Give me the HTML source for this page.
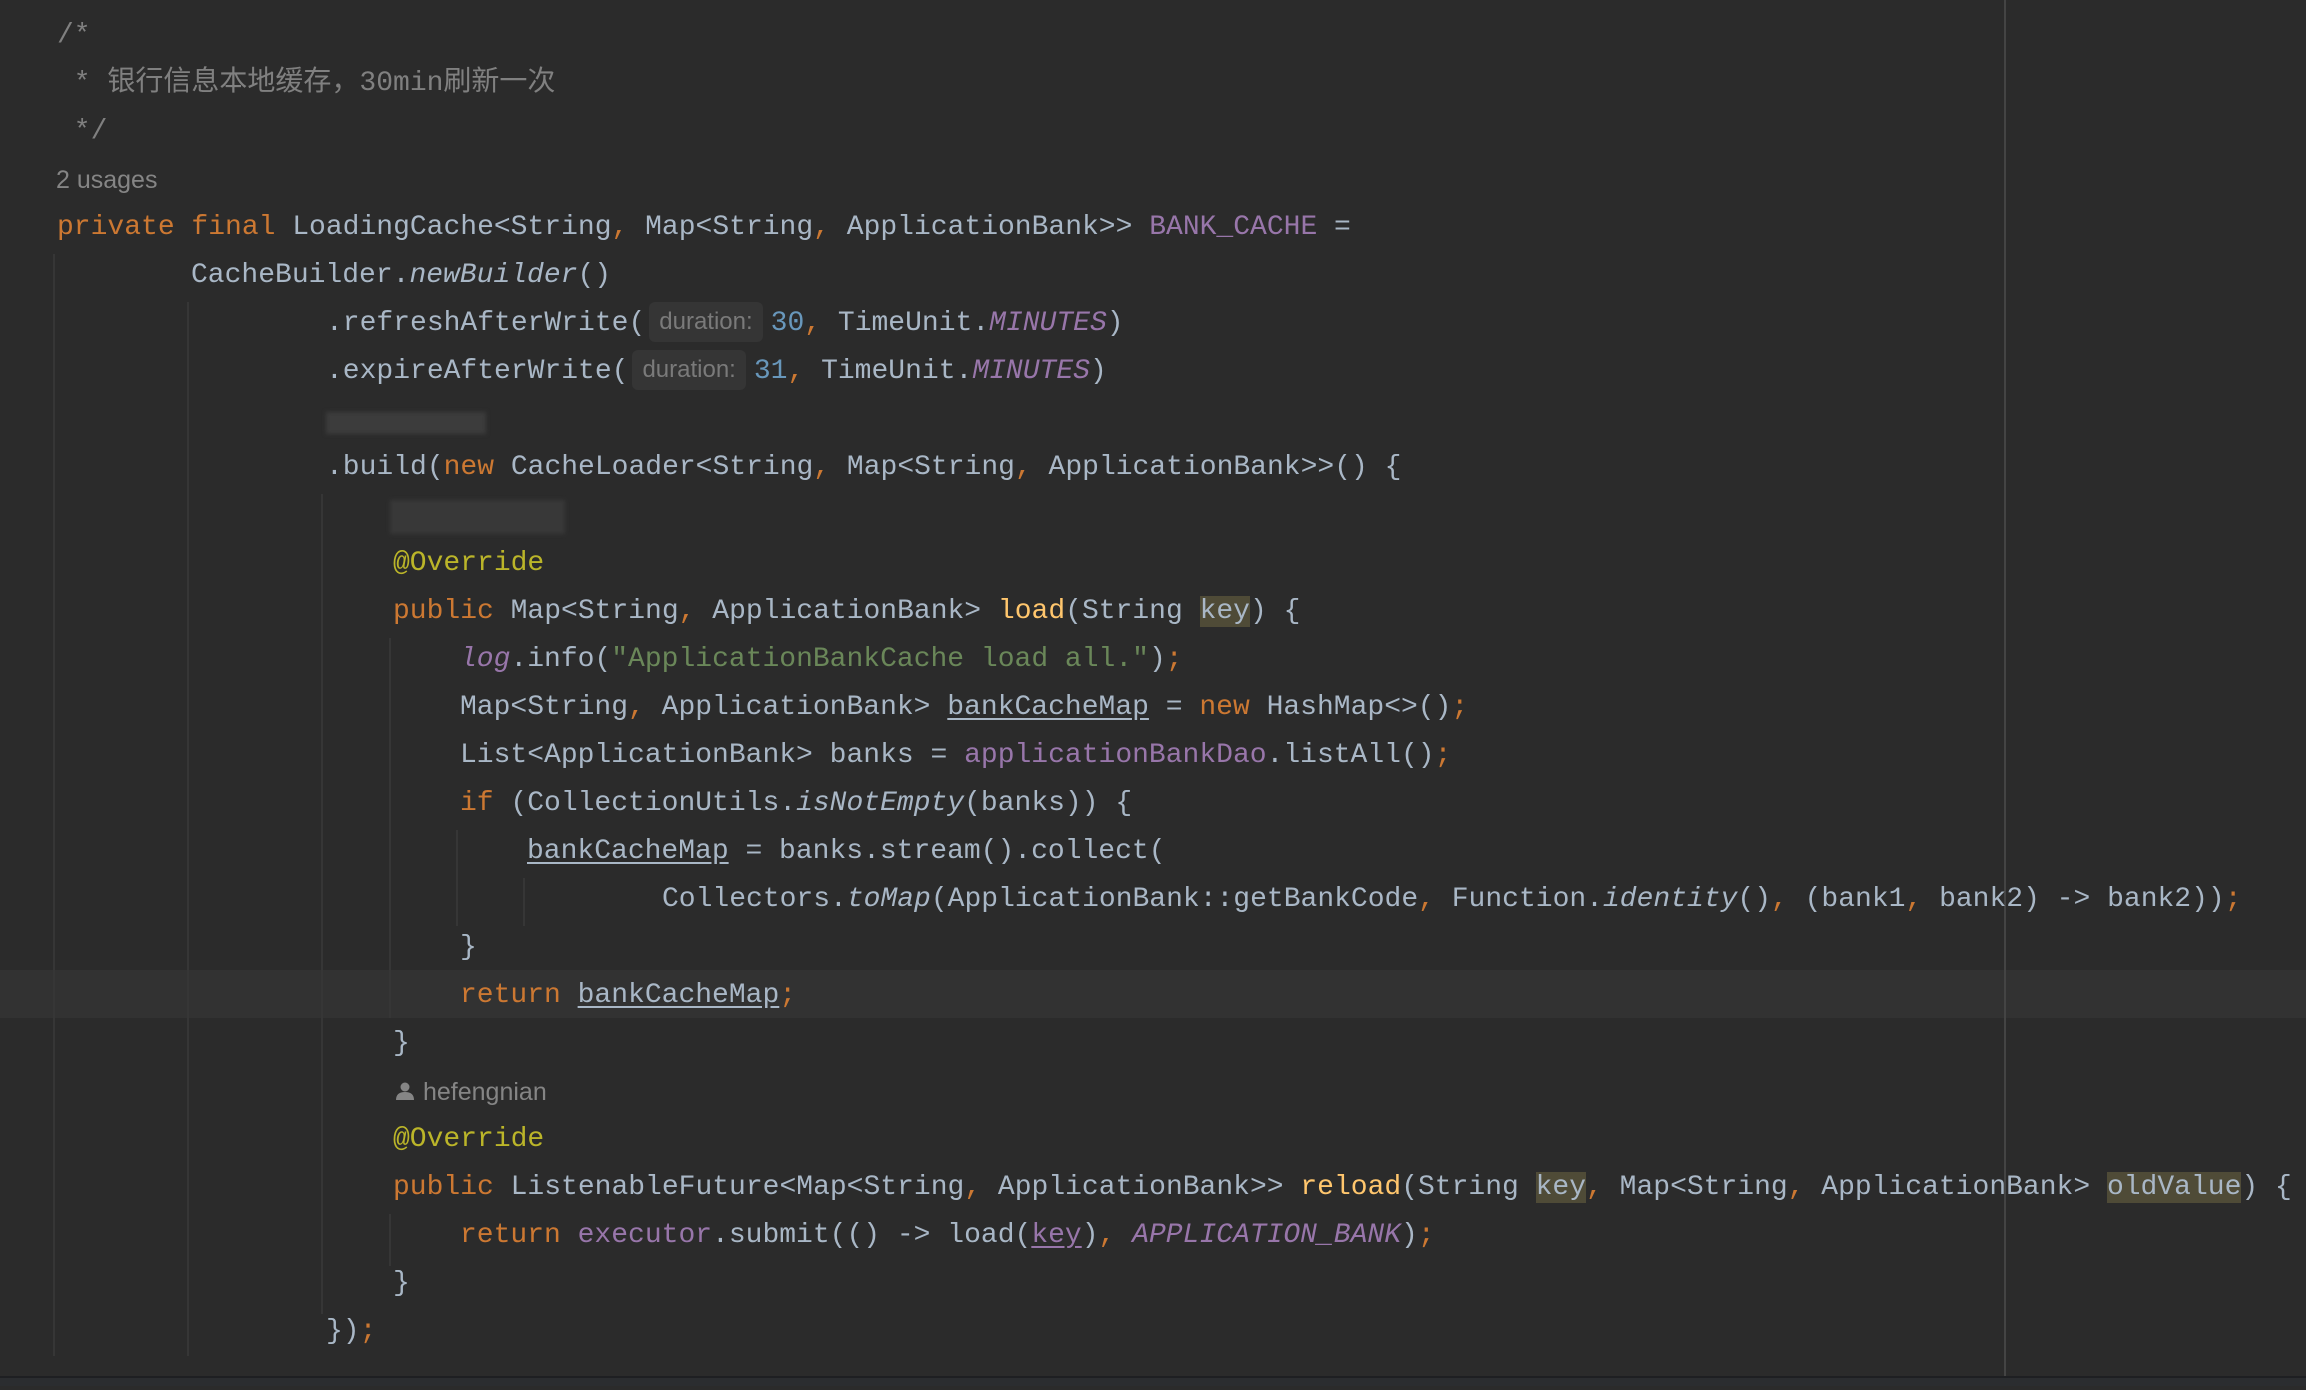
<!DOCTYPE html>
<html><head><meta charset="utf-8"><style>
html,body{margin:0;padding:0;}
body{width:2306px;height:1386px;background:#2b2b2b;position:relative;overflow:hidden;font-family:"Liberation Mono","Noto Sans CJK SC",monospace;font-size:28px;color:#a9b7c6;}
#w{position:absolute;left:0;top:4px;width:2306px;height:1386px}
.l{position:absolute;white-space:pre;height:48px;line-height:48px;}
.k{color:#cc7832}.p{color:#9876aa}.pi{color:#9876aa;font-style:italic}.i{font-style:italic}
.s{color:#6a8759}.n{color:#6897bb}.a{color:#bbb529}.c{color:#808080}.m{color:#ffc66d}
.u{text-decoration:underline;text-underline-offset:4px}
.h{background:#4f4b37}
.hint{display:inline-block;font-family:"Liberation Sans",sans-serif;font-size:24px;color:#7a7a7a;background:#353535;border-radius:6px;padding:0 10px;line-height:40px;margin:0 8px 0 4px;vertical-align:1px}
.g{position:absolute;width:2px;background:#363636}
.pr{font-family:"Liberation Sans",sans-serif;font-size:25px;color:#858585}
.blur{position:absolute;background:#3c3c3c;filter:blur(2px)}
</style></head><body>
<div style="position:absolute;left:0;top:970px;width:2306px;height:48px;background:#323232"></div>
<div style="position:absolute;left:2004px;top:0;width:2px;height:1376px;background:#444"></div>
<div style="position:absolute;left:0;top:1376px;width:2306px;height:2px;background:#1e1f22"></div>
<div style="position:absolute;left:0;top:1378px;width:2306px;height:8px;background:#2b2d30"></div>
<div id="w">
<div class="g" style="left:53px;top:250px;height:1102px"></div>
<div class="g" style="left:187px;top:298px;height:1054px"></div>
<div class="g" style="left:321px;top:490px;height:820px"></div>
<div class="g" style="left:389px;top:634px;height:380px"></div>
<div class="g" style="left:389px;top:1210px;height:52px"></div>
<div class="g" style="left:456px;top:826px;height:96px"></div>
<div class="g" style="left:523px;top:874px;height:48px"></div>
<div class="blur" style="left:326px;top:408px;width:160px;height:22px"></div>
<div class="blur" style="left:390px;top:496px;width:175px;height:34px;opacity:.8"></div>
<div class="l c" style="left:57px;top:8px">/*</div>
<div class="l c" style="left:57px;top:56px"> * 银行信息本地缓存，30min刷新一次</div>
<div class="l c" style="left:57px;top:104px"> */</div>
<div class="l pr" style="left:56px;top:152px">2 usages</div>
<div class="l" style="left:57px;top:200px"><span class="k">private final </span>LoadingCache&lt;String<span class="k">, </span>Map&lt;String<span class="k">, </span>ApplicationBank&gt;&gt; <span class="p">BANK_CACHE</span> =</div>
<div class="l" style="left:191px;top:248px">CacheBuilder.<span class="i">newBuilder</span>()</div>
<div class="l" style="left:326px;top:296px">.refreshAfterWrite(<span class="hint">duration:</span><span class="n">30</span><span class="k">, </span>TimeUnit.<span class="pi">MINUTES</span>)</div>
<div class="l" style="left:326px;top:344px">.expireAfterWrite(<span class="hint">duration:</span><span class="n">31</span><span class="k">, </span>TimeUnit.<span class="pi">MINUTES</span>)</div>
<div class="l" style="left:326px;top:440px">.build(<span class="k">new </span>CacheLoader&lt;String<span class="k">, </span>Map&lt;String<span class="k">, </span>ApplicationBank&gt;&gt;() {</div>
<div class="l a" style="left:393px;top:536px">@Override</div>
<div class="l" style="left:393px;top:584px"><span class="k">public </span>Map&lt;String<span class="k">, </span>ApplicationBank&gt; <span class="m">load</span>(String <span class="h">key</span>) {</div>
<div class="l" style="left:460px;top:632px"><span class="pi">log</span>.info(<span class="s">"ApplicationBankCache load all."</span>)<span class="k">;</span></div>
<div class="l" style="left:460px;top:680px">Map&lt;String<span class="k">, </span>ApplicationBank&gt; <span class="u">bankCacheMap</span> = <span class="k">new </span>HashMap&lt;&gt;()<span class="k">;</span></div>
<div class="l" style="left:460px;top:728px">List&lt;ApplicationBank&gt; banks = <span class="p">applicationBankDao</span>.listAll()<span class="k">;</span></div>
<div class="l" style="left:460px;top:776px"><span class="k">if </span>(CollectionUtils.<span class="i">isNotEmpty</span>(banks)) {</div>
<div class="l" style="left:527px;top:824px"><span class="u">bankCacheMap</span> = banks.stream().collect(</div>
<div class="l" style="left:662px;top:872px">Collectors.<span class="i">toMap</span>(ApplicationBank::getBankCode<span class="k">, </span>Function.<span class="i">identity</span>()<span class="k">, </span>(bank1<span class="k">, </span>bank2) -&gt; bank2))<span class="k">;</span></div>
<div class="l" style="left:460px;top:920px">}</div>
<div class="l" style="left:460px;top:968px"><span class="k">return </span><span class="u">bankCacheMap</span><span class="k">;</span></div>
<div class="l" style="left:393px;top:1016px">}</div>
<div class="l pr" style="left:395px;top:1064px"><svg width="20" height="20" viewBox="0 0 20 20" style="vertical-align:-1px;margin-right:8px"><circle cx="10" cy="6" r="4.5" fill="#858585"/><path d="M1 19 Q1 11 10 11 Q19 11 19 19Z" fill="#858585"/></svg>hefengnian</div>
<div class="l a" style="left:393px;top:1112px">@Override</div>
<div class="l" style="left:393px;top:1160px"><span class="k">public </span>ListenableFuture&lt;Map&lt;String<span class="k">, </span>ApplicationBank&gt;&gt; <span class="m">reload</span>(String <span class="h">key</span><span class="k">, </span>Map&lt;String<span class="k">, </span>ApplicationBank&gt; <span class="h">oldValue</span>) {</div>
<div class="l" style="left:460px;top:1208px"><span class="k">return </span><span class="p">executor</span>.submit(() -&gt; load(<span class="p u">key</span>)<span class="k">, </span><span class="pi">APPLICATION_BANK</span>)<span class="k">;</span></div>
<div class="l" style="left:393px;top:1256px">}</div>
<div class="l" style="left:326px;top:1304px">})<span class="k">;</span></div>
</div>
</body></html>
